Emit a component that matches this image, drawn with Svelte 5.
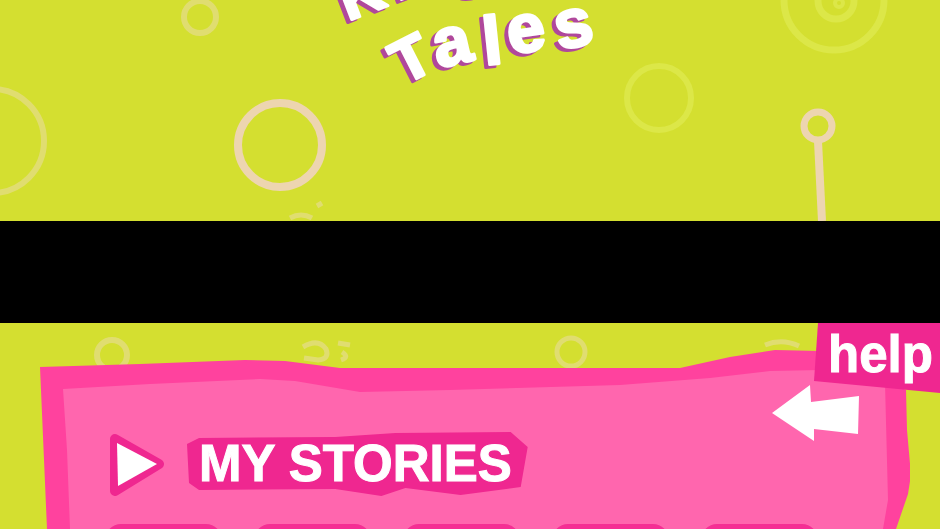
<script>
  let selected = $state(null);

  // letters hop along a curve, so each one has its own spot and tilt
  const logoTop = [
    { char: 'K', x: 348, y: 21, tilt: -21 },
    { char: 'i', x: 397, y: 1, tilt: -20 },
    { char: 'd', x: 420, y: -7, tilt: -14 },
    { char: 's', x: 456, y: -2, tilt: -8 }
  ];
  const logoBottom = [
    { char: 'T', x: 404, y: 85, tilt: -27 },
    { char: 'a', x: 438, y: 68, tilt: -13 },
    { char: 'l', x: 485, y: 65, tilt: -6 },
    { char: 'e', x: 510, y: 54, tilt: -8 },
    { char: 's', x: 559, y: 50, tilt: -12 }
  ];

  const stories = [1, 2, 3, 4, 5];
</script>

{#snippet word(letters)}
  {#each letters as l}
    <text class="shade" class:cap={l.char < 'a'} transform="translate({l.x - 4} {l.y + 3}) rotate({l.tilt})">{l.char}</text>
  {/each}
  {#each letters as l}
    <text class="face" class:cap={l.char < 'a'} transform="translate({l.x} {l.y}) rotate({l.tilt})">{l.char}</text>
  {/each}
{/snippet}

<div class="app">
  <header>
    <svg class="scene" viewBox="0 0 940 221" role="img" aria-label="Kids Tales">
      <g fill="none">
        <circle class="soft" cx="-8" cy="141" r="52" stroke-width="6" />
        <circle class="soft" cx="200" cy="17" r="16" stroke-width="6" />
        <circle class="pale" cx="280" cy="145" r="42" stroke-width="8" />
        <circle class="faint" cx="659" cy="98" r="32" stroke-width="6" />
        <circle class="faint" cx="834" cy="0" r="50" stroke-width="7" />
        <circle class="faint" cx="836" cy="1" r="18" stroke-width="7" />
        <circle class="faint" cx="839" cy="3" r="4" stroke-width="4" />
        <circle class="pale" cx="818" cy="126" r="14" stroke-width="7" />
        <path class="pale" d="M818 141 L822 221" stroke-width="8" />
        <path class="soft" d="M290 218 Q301 212 312 218 M317 206 L322 203" stroke-width="5" />
      </g>
      {@render word(logoTop)}
      {@render word(logoBottom)}
    </svg>
  </header>

  <main>
    <svg class="rings" viewBox="0 0 940 50" fill="none" aria-hidden="true">
      <circle class="soft" cx="112" cy="32" r="15" stroke-width="6" />
      <path class="soft" d="M303 24 Q318 15 326 26 Q330 36 318 37 L304 35" stroke-width="5" />
      <path class="soft" d="M338 20 L350 22 M342 29 Q350 34 341 37" stroke-width="5" />
      <circle class="soft" cx="571" cy="29" r="14" stroke-width="5" />
      <path class="soft" d="M765 22 Q782 15 799 23" stroke-width="5" />
    </svg>

    <section class="panel">
      <svg class="paper" viewBox="0 0 870 179" preserveAspectRatio="none" aria-hidden="true">
        <path fill="#ff429e" d="M0 17 L100 14 L205 10 L245 11 L300 18 L640 18 L690 7 L735 0 L780 1 L866 40 L867 80 L871 125 L868 144 L856 179 L7 179 Z" />
        <path fill="#ff66ae" d="M23 39 L110 34 L220 29 L255 31 L320 42 L410 40 L580 35 L670 28 L730 21 L780 20 L845 33 L848 150 L843 179 L30 179 L27 100 Z" />
      </svg>

      <div class="bar">
        <button class="play" aria-label="Play">
          <svg width="60" height="64" viewBox="0 0 60 64">
            <path d="M10 7 L54 32 L10 59 Z" fill="#ef2790" stroke="#ef2790" stroke-width="10" stroke-linejoin="round" />
            <path d="M12 11 L52 32 L13 54 Z" fill="#fff" />
          </svg>
        </button>
        <h2>
          <svg class="splash" viewBox="0 0 342 64" preserveAspectRatio="none" aria-hidden="true">
            <path fill="#ef2790" d="M2 12 L14 6 L150 5 L210 1 L325 0 L342 15 L335 55 L275 63 L220 56 L196 64 L150 57 L14 58 L4 51 Z" />
          </svg>
          <span>MY STORIES</span>
        </h2>
        <button class="back" aria-label="Back">
          <svg width="88" height="58" viewBox="0 0 88 58">
            <path d="M0 29 L38 1 L39 18 L87 12 L86 50 L42 45 L42 57 Z" fill="#fff" />
          </svg>
        </button>
      </div>

      <ul>
        {#each stories as id}
          <li>
            <button class="story" class:selected={selected === id} aria-label="Story {id}" onclick={() => (selected = id)}></button>
          </li>
        {/each}
      </ul>
    </section>

    <button class="help">help</button>
  </main>
</div>

<style>
  :global(body) {
    background: #000;
    margin: 0;
  }

  .app {
    display: flex;
    flex-direction: column;
    gap: 102px;
    height: 100vh;
    overflow: hidden;
    font-family: "Liberation Sans", Arial, sans-serif;
    font-weight: bold;
  }

  button {
    padding: 0;
    border: 0;
    background: none;
    font: inherit;
    cursor: pointer;
  }

  svg {
    display: block;
  }

  header,
  main {
    background: #d4df30;
  }

  .scene {
    width: 100%;
    height: auto;
  }

  .pale {
    stroke: #edd5b0;
  }

  .soft {
    stroke: #e0dd70;
  }

  .faint {
    stroke: #dce748;
  }

  .scene text {
    font-size: 68px;
    stroke-width: 3px;
    stroke-linejoin: round;
  }

  .scene text.cap {
    font-size: 60px;
  }

  .shade {
    fill: #b0489c;
    stroke: #b0489c;
  }

  .face {
    fill: #fff;
    stroke: #fff;
  }

  main {
    position: relative;
    display: flex;
    flex: 1;
    min-height: 0;
    padding: 27px 30px 0 40px;
    overflow: hidden;
  }

  .rings {
    position: absolute;
    top: 0;
    left: 0;
    width: 100%;
  }

  .panel {
    position: relative;
    flex: 1;
    min-width: 0;
    box-sizing: border-box;
    padding: 34px 50px 0 65px;
  }

  .paper,
  .splash {
    position: absolute;
    top: 0;
    left: 0;
    width: 100%;
    height: 100%;
  }

  .bar {
    position: relative;
    display: flex;
    align-items: flex-end;
    gap: 20px;
    height: 112px;
  }

  h2 {
    position: relative;
    margin: 0;
    padding: 0 16px 0 14px;
    font-size: 51px;
    line-height: 64px;
    white-space: nowrap;
    color: #fff;
    -webkit-text-stroke: 1px #fff;
  }

  h2 span {
    position: relative;
  }

  .back {
    align-self: flex-start;
    margin-left: auto;
  }

  ul {
    position: relative;
    display: flex;
    gap: 32px;
    margin: 0;
    padding: 28px 0 0;
    list-style: none;
  }

  .story {
    display: block;
    width: 117px;
    height: 100px;
    border-radius: 16px 16px 12px 12px;
    background: #f52f94;
  }

  .story.selected {
    background: #d81880;
  }

  .help {
    position: absolute;
    top: 0;
    right: 0;
    width: 126px;
    height: 70px;
    padding: 0 0 6px 14px;
    overflow: hidden;
    background: #ef2790;
    clip-path: polygon(4px 0, 100% 0, 100% 100%, 0 58px);
    color: #fff;
    font-size: 51px;
    line-height: 64px;
    text-align: left;
    -webkit-text-stroke: 1px #fff;
  }
</style>
